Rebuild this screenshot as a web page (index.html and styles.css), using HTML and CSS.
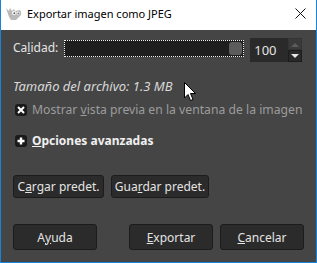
FILE: index.html
```html
<!DOCTYPE html>
<html lang="es">
<head>
    <meta charset="UTF-8">
    <title>Exportar imagen como JPEG</title>
    <link rel="stylesheet" href="styles.css">
</head>
<body>
    <div class="window">
        <div class="titlebar">
            <svg class="app-icon" width="18" height="16" viewBox="0 0 18 16">
                <path d="M1 3 L4 6 L5 3 L7 6 L9 4 L10 6 L15 5 Q17 7 16 10 L13 13 L11 15 L6 15 L4 12 L3 9 Z" fill="#b9b9b9"/>
                <circle cx="9" cy="8" r="2" fill="#fff"/>
                <circle cx="13" cy="8" r="1.6" fill="#fff"/>
                <circle cx="9.3" cy="8.2" r="0.9" fill="#555"/>
                <circle cx="13.2" cy="8.2" r="0.8" fill="#555"/>
            </svg>
            <span class="title">Exportar imagen como JPEG</span>
            <svg class="close" width="11" height="11" viewBox="0 0 11 11">
                <path d="M0.5 0.5 L10.5 10.5 M10.5 0.5 L0.5 10.5" stroke="#111" stroke-width="1"/>
            </svg>
        </div>

        <div class="content">
            <div class="quality-row">
                <span class="label">Ca<u>l</u>idad:</span>
                <div class="slider">
                    <span class="handle"></span>
                </div>
                <div class="spin">
                    <span class="spin-value">100</span>
                    <div class="spin-buttons">
                        <span class="spin-btn up">
                            <svg width="8" height="5" viewBox="0 0 8 5"><path d="M0 5 L4 1 L8 5 Z" fill="#5c5c5c"/></svg>
                        </span>
                        <span class="spin-btn down">
                            <svg width="8" height="5" viewBox="0 0 8 5"><path d="M0 0 L8 0 L4 4 Z" fill="#e8e8e8"/></svg>
                        </span>
                    </div>
                </div>
            </div>

            <div class="file-size">Tamaño del archivo: 1.3 MB</div>

            <div class="check-row">
                <span class="check">
                    <svg width="8" height="8" viewBox="0 0 8 8"><path d="M1 1 L7 7 M7 1 L1 7" stroke="#fff" stroke-width="2"/></svg>
                </span>
                <span class="check-label">Mostrar <u>v</u>ista previa en la ventana de la imagen</span>
            </div>

            <div class="expander">
                <span class="expander-icon">
                    <svg width="8" height="8" viewBox="0 0 8 8"><path d="M4 0.5 V7.5 M0.5 4 H7.5" stroke="#fff" stroke-width="2.4"/></svg>
                </span>
                <span class="expander-label"><u>O</u>pciones avanzadas</span>
            </div>

            <div class="presets">
                <button class="btn btn-load">C<u>a</u>rgar predet.</button>
                <button class="btn btn-save">Gua<u>r</u>dar predet.</button>
            </div>

            <div class="actions">
                <button class="btn btn-action">A<u>y</u>uda</button>
                <div class="actions-right">
                    <button class="btn btn-action"><u>E</u>xportar</button>
                    <button class="btn btn-action"><u>C</u>ancelar</button>
                </div>
            </div>
        </div>

        <svg class="cursor" width="13" height="20" viewBox="0 0 13 20">
            <path d="M0.5 0.5 L0.5 16 L4 12.5 L6.5 18.5 L9 17.5 L6.5 11.5 L11.5 11.5 Z" fill="#fff" stroke="#000" stroke-width="1"/>
        </svg>
    </div>
</body>
</html>
```

FILE: styles.css
```css
body {
    margin: 0;
    font-family: 'Noto Sans', 'DejaVu Sans', sans-serif;
    font-size: 12px;
}

.window {
    position: relative;
    width: 317px;
    height: 263px;
    box-sizing: border-box;
    border: 1px solid #1883d7;
    border-top: none;
    background: #454545;
    display: flex;
    flex-direction: column;
    overflow: hidden;
}

.titlebar {
    height: 30px;
    background: #fff;
    display: flex;
    align-items: center;
    padding: 0 0 4px 4px;
    box-sizing: border-box;
    color: #000;
}

.app-icon {
    margin-right: 4px;
}

.title {
    font-size: 11px;
    flex: 1;
}

.close {
    margin-right: 10px;
}

.content {
    flex: 1;
    display: flex;
    flex-direction: column;
    padding: 8px 12px 12px 12px;
    color: #e4e4e4;
}

.quality-row {
    display: flex;
    align-items: flex-start;
    height: 24px;
}

.label {
    line-height: 20px;
}

.slider {
    margin: 2px 0 0 6px;
    width: 180px;
    height: 17px;
    box-sizing: border-box;
    border: 1px dotted #f0f0f0;
    background: #1e1e1e;
    display: flex;
    justify-content: flex-end;
    align-items: center;
    padding-right: 1px;
}

.handle {
    width: 13px;
    height: 13px;
    border-radius: 3px;
    background: #5c5c5c;
}

.spin {
    margin-left: 6px;
    display: flex;
    height: 24px;
}

.spin-value {
    width: 38px;
    box-sizing: border-box;
    background: #2a2a2a;
    padding-left: 4px;
    line-height: 24px;
    font-size: 13px;
}

.spin-buttons {
    display: flex;
    flex-direction: column;
    width: 14px;
}

.spin-btn {
    flex: 1;
    display: flex;
    align-items: center;
    justify-content: center;
    box-sizing: border-box;
    border: 1px solid #1c1c1c;
}

.spin-btn.up {
    background: #3a3a3a;
    border-color: #333;
}

.spin-btn.down {
    background: #2a2a2a;
}

.file-size {
    margin-top: 15px;
    line-height: 18px;
    font-size: 13px;
    font-style: italic;
    color: #d8d8d8;
}

.check-row,
.expander {
    display: flex;
    align-items: center;
    line-height: 18px;
    white-space: nowrap;
}

.check-row {
    margin-top: 6px;
}

.expander {
    margin-top: 13px;
}

.check,
.expander-icon {
    flex: none;
    width: 12px;
    height: 12px;
    margin: 0 5px 0 2px;
    border-radius: 3px;
    background: #1a1a1a;
    display: flex;
    align-items: center;
    justify-content: center;
}

.check-label {
    font-size: 12.2px;
    color: #9c9c9c;
}

.expander-label {
    font-weight: bold;
    color: #f0f0f0;
}

.presets {
    margin-top: 25px;
    display: flex;
    gap: 7px;
}

.btn {
    font-family: inherit;
    font-size: 12px;
    color: #e4e4e4;
    background: #2b2b2b;
    border: 1px solid #1c1c1c;
    border-radius: 3px;
    padding: 0;
    margin: 0;
}

.btn-load {
    width: 91px;
    height: 23px;
}

.btn-save {
    width: 98px;
    height: 23px;
}

.actions {
    margin-top: auto;
    display: flex;
    justify-content: space-between;
}

.actions-right {
    display: flex;
    gap: 7px;
}

.btn-action {
    width: 84px;
    height: 26px;
}

.cursor {
    position: absolute;
    left: 183px;
    top: 82px;
}
```
